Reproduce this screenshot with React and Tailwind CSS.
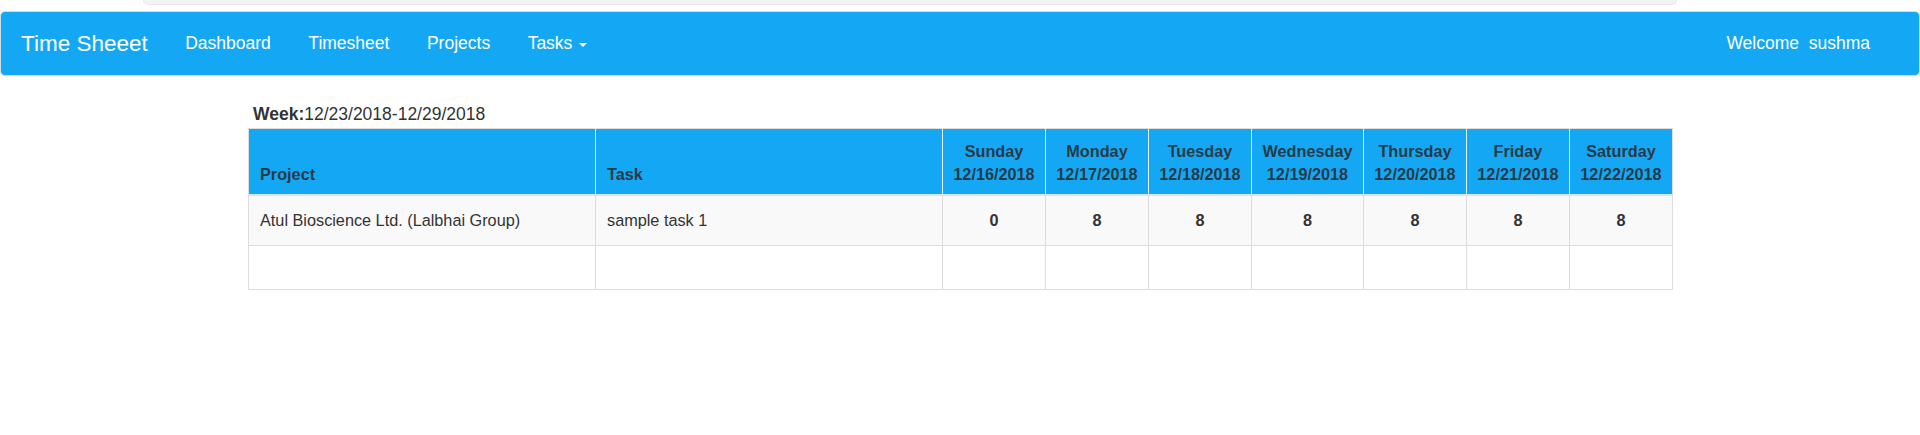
import React from 'react';

const days = [
  { name: 'Sunday', date: '12/16/2018', hours: '0', w: 'w-[103px]' },
  { name: 'Monday', date: '12/17/2018', hours: '8', w: 'w-[103px]' },
  { name: 'Tuesday', date: '12/18/2018', hours: '8', w: 'w-[103px]' },
  { name: 'Wednesday', date: '12/19/2018', hours: '8', w: 'w-[112px]' },
  { name: 'Thursday', date: '12/20/2018', hours: '8', w: 'w-[103px]' },
  { name: 'Friday', date: '12/21/2018', hours: '8', w: 'w-[103px]' },
  { name: 'Saturday', date: '12/22/2018', hours: '8', w: 'w-[103px]' },
];

const navLinks = ['Dashboard', 'Timesheet', 'Projects'];

const Navbar = () => (
  <nav className="h-[65px] bg-[#14a8f4] border border-[#c9dfeb] rounded-[5px] flex items-center text-white">
    <a className="pl-[20px] pr-[18.75px] text-[22.5px] leading-[25px]">Time Sheeet</a>
    {navLinks.map(link => (
      <a key={link} className="px-[18.75px] text-[17.5px] leading-[25px]">{link}</a>
    ))}
    <a className="px-[18.75px] text-[17.5px] leading-[25px] flex items-center">
      Tasks
      <span className="ml-[7px] mt-[2px] w-0 h-0 border-l-[4px] border-r-[4px] border-t-[4px] border-l-transparent border-r-transparent border-t-white" />
    </a>
    <div className="ml-auto pr-[49px] text-[17.5px] leading-[25px] whitespace-pre">Welcome  sushma</div>
  </nav>
);

const TimesheetTable = () => (
  <table className="table-fixed border-collapse w-[1424px] text-[16.25px] text-[#333] border border-[#ddd]">
    <colgroup>
      <col className="w-[347px]" />
      <col className="w-[347px]" />
      {days.map(d => <col key={d.name} className={d.w} />)}
    </colgroup>
    <thead>
      <tr className="bg-[#14a8f4] text-[#263a48]">
        <th className="h-[66px] align-bottom text-left font-bold leading-[23px] pl-[11px] pb-[8px] border-b-2 border-b-[#d3e6f0] border-r border-r-[#e4f1f9]">Project</th>
        <th className="h-[66px] align-bottom text-left font-bold leading-[23px] pl-[11px] pb-[8px] border-b-2 border-b-[#d3e6f0] border-r border-r-[#e4f1f9]">Task</th>
        {days.map((d, i) => (
          <th
            key={d.name}
            className={`h-[66px] align-bottom text-center font-bold leading-[23px] pb-[8px] border-b-2 border-b-[#d3e6f0] ${i < days.length - 1 ? 'border-r border-r-[#e4f1f9]' : ''}`}
          >
            <div>{d.name}</div>
            <div>{d.date}</div>
          </th>
        ))}
      </tr>
    </thead>
    <tbody>
      <tr className="bg-[#f9f9f9]">
        <td className="h-[51px] pl-[11px] border border-[#ddd] align-middle">Atul Bioscience Ltd. (Lalbhai Group)</td>
        <td className="h-[51px] pl-[11px] border border-[#ddd] align-middle">sample task 1</td>
        {days.map(d => (
          <td key={d.name} className="h-[51px] border border-[#ddd] text-center font-bold align-middle">{d.hours}</td>
        ))}
      </tr>
      <tr className="bg-white">
        <td className="h-[44px] border border-[#ddd]" />
        <td className="h-[44px] border border-[#ddd]" />
        {days.map(d => (
          <td key={d.name} className="h-[44px] border border-[#ddd]" />
        ))}
      </tr>
    </tbody>
  </table>
);

export default function App() {
  return (
    <div className="w-full h-[435px] bg-white overflow-hidden" style={{ fontFamily: '"Liberation Sans", Arial, sans-serif' }}>
      {/* browser chrome remnant */}
      <div className="h-[11px]">
        <div className="ml-[143px] w-[1534px] h-[5px] bg-[#f1f3f4] border-b border-x border-[#e6e8ea] rounded-b-[6px]" />
      </div>
      <Navbar />
      <div className="w-[1424px] mx-auto mt-[26px]">
        <div className="h-[26px] pl-[5px] text-[17.5px] leading-[24px] text-[#333]">
          <span className="font-bold">Week:</span>12/23/2018-12/29/2018
        </div>
        <TimesheetTable />
      </div>
    </div>
  );
}
